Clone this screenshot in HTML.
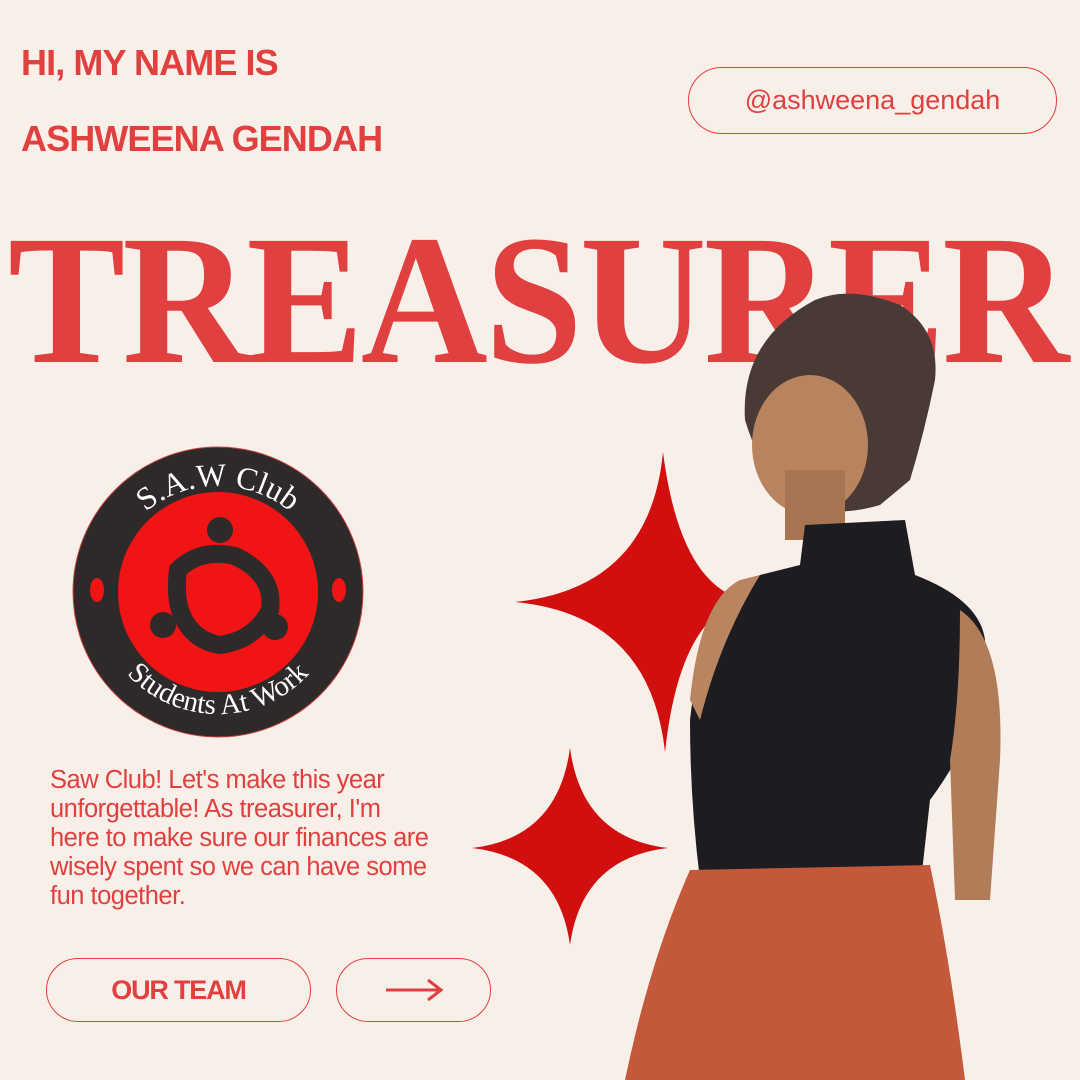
<!DOCTYPE html>
<html><head><meta charset="utf-8"><style>
body{margin:0}
.p{position:relative;width:1080px;height:1080px;background:#f9efe9;overflow:hidden;font-family:"Liberation Sans",sans-serif;color:#e0403f}
.h{position:absolute;left:21px;font-weight:bold;font-size:36px;letter-spacing:-0.9px}
.pill{position:absolute;border:1.5px solid #e0403f;border-radius:40px;box-sizing:border-box;display:flex;align-items:center;justify-content:center}
.t{position:absolute;left:8px;top:208px;font-family:"Liberation Serif",serif;font-weight:bold;font-size:185px;line-height:1;transform-origin:0 0;transform:scaleX(0.95);letter-spacing:-3px;white-space:nowrap}
.txt{position:absolute;left:50px;top:766px;font-size:25.5px;line-height:29px;width:380px;letter-spacing:-0.5px}
</style></head><body><div class="p">
<div class="h" style="top:42px">HI, MY NAME IS</div>
<div class="h" style="top:118px">ASHWEENA GENDAH</div>
<div class="pill" style="left:688px;top:67px;width:369px;height:67px;font-size:27px">@ashweena_gendah</div>
<div class="t">TREASURER</div>
<svg style="position:absolute;left:0;top:0" width="1080" height="1080">
<defs><path id="arcTop" d="M104 600 A114 114 0 0 1 332 600"/><path id="arcBot" d="M94 590 A124 124 0 0 0 342 590"/></defs>
<path d="M663 452 Q680 585 745 600 Q680 615 665 752 Q650 615 515 602 Q650 588 663 452Z" fill="#d10f0f"/>
<path d="M570 748 Q582 838 668 848 Q582 858 570 945 Q558 858 472 848 Q558 838 570 748Z" fill="#d10f0f"/>
<circle cx="218" cy="592" r="145" fill="#2f2a2a" stroke="#c44" stroke-width="1"/>
<circle cx="218" cy="592" r="100" fill="#f01414"/>
<ellipse cx="97" cy="590" rx="7" ry="12" fill="#f01414"/>
<ellipse cx="339" cy="590" rx="7" ry="12" fill="#f01414"/>
<circle cx="220" cy="530" r="13" fill="#2f2a2a"/><circle cx="163" cy="625" r="13" fill="#2f2a2a"/><circle cx="275" cy="627" r="13" fill="#2f2a2a"/>
<path d="M178 570 Q200 548 235 556 Q275 575 270 610 Q255 640 220 645 Q190 640 180 610 Q175 595 178 570Z" fill="none" stroke="#2f2a2a" stroke-width="18"/>
<text font-family="Liberation Serif,serif" font-size="32" fill="#fff" text-anchor="middle"><textPath href="#arcTop" startOffset="50%">S.A.W Club</textPath></text>
<text font-family="Liberation Serif,serif" font-size="29" fill="#fff" text-anchor="middle"><textPath href="#arcBot" startOffset="50%">Students At Work</textPath></text>
<path d="M815 300 Q850 285 900 305 Q940 330 935 380 Q925 430 910 480 L880 505 Q830 520 790 500 Q760 470 745 420 Q740 340 815 300Z" fill="#4a3a36"/>
<ellipse cx="810" cy="445" rx="58" ry="70" fill="#b8845f"/>
<rect x="785" y="470" width="60" height="70" fill="#a87552"/>
<path d="M805 525 L905 520 L915 575 Q980 600 985 640 L985 700 Q960 760 930 800 L920 890 L700 880 Q690 800 690 720 Q700 620 760 575 L800 565Z" fill="#1d1c20"/>
<path d="M740 580 Q700 600 690 700 L700 720 Q720 640 760 575Z" fill="#b98560"/>
<path d="M960 610 Q1005 640 1000 760 L990 900 L955 900 L950 760 Q960 700 960 610Z" fill="#b17c58"/>
<path d="M690 870 L930 865 Q950 960 965 1080 L625 1080 Q650 960 690 870Z" fill="#c4583b"/>
</svg>
<div class="txt">Saw Club! Let's make this year unforgettable! As treasurer, I'm here to make sure our finances are wisely spent so we can have some fun together.</div>
<div class="pill" style="left:46px;top:958px;width:265px;height:64px;font-size:27px;font-weight:bold;letter-spacing:-1.2px">OUR TEAM</div>
<div class="pill" style="left:336px;top:958px;width:155px;height:64px"><svg width="60" height="24"><path d="M2 12H56M44 2L57 12L44 22" fill="none" stroke="#e0403f" stroke-width="3"/></svg></div>
</div></body></html>
